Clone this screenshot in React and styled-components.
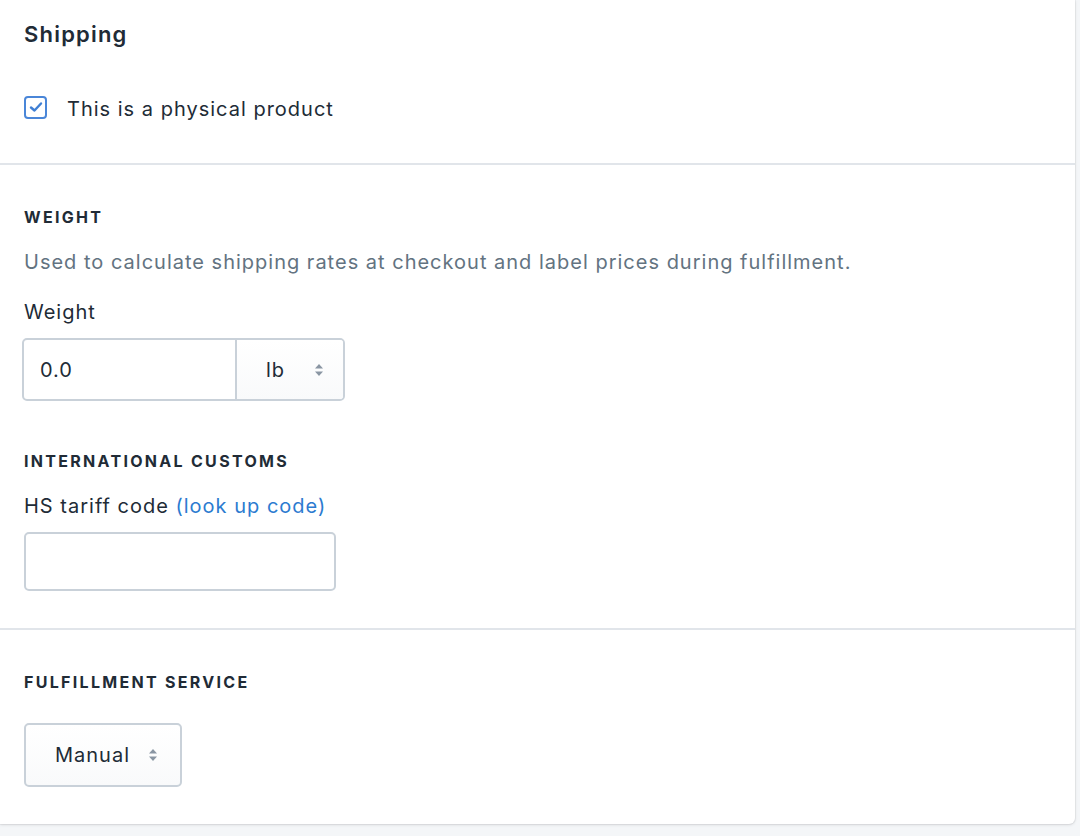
import React from "react";
import styled, { createGlobalStyle } from "styled-components";

const GlobalStyle = createGlobalStyle`
  html, body { margin: 0; padding: 0; }
  body {
    background: #f4f6f8;
    font-family: Inter, "Noto Sans", "Liberation Sans", sans-serif;
    color: #212b36;
    letter-spacing: 1px;
    -webkit-font-smoothing: antialiased;
  }
`;

const Page = styled.div`
  width: 1080px;
  height: 836px;
  background: #f4f6f8;
`;

const Card = styled.div`
  width: 1075px;
  background: #fff;
  border-bottom-right-radius: 6px;
  box-shadow: 0 0 0 1px rgba(63, 63, 68, 0.05), 0 1px 3px 0 rgba(63, 63, 68, 0.15);
`;

const Section = styled.section`
  padding: ${(p) => p.$pad};
  border-top: ${(p) => (p.$first ? "none" : "2px solid #e1e5ea")};
`;

const Heading = styled.h2`
  margin: 0;
  font-size: 22px;
  line-height: 28px;
  font-weight: 600;
  letter-spacing: 1.2px;
  color: #212b36;
`;

const CheckRow = styled.label`
  display: flex;
  align-items: center;
  gap: 20px;
  margin-top: 47px;
  height: 24px;
  font-size: 20px;
  line-height: 28px;
  color: #212b36;
`;

const CheckText = styled.span`
  padding-top: 3px;
`;

const Box = styled.span`
  box-sizing: border-box;
  width: 23px;
  height: 23px;
  border: 2px solid #4a86d8;
  border-radius: 4px;
  display: flex;
  align-items: center;
  justify-content: center;
  background: #fff;
`;

const Subheading = styled.h3`
  margin: ${(p) => p.$mt || "0"} 0 0;
  font-size: 16px;
  line-height: 24px;
  font-weight: 700;
  letter-spacing: 2.3px;
  text-transform: uppercase;
  color: #212b36;
`;

const Help = styled.p`
  margin: 19px 0 0;
  font-size: 20px;
  line-height: 28px;
  color: #637381;
`;

const Label = styled.div`
  margin-top: ${(p) => p.$mt};
  font-size: 20px;
  line-height: 28px;
  color: #212b36;
`;

const Link = styled.a`
  color: #2c7bd0;
  text-decoration: none;
`;

const Group = styled.div`
  display: flex;
  margin-top: 12px;
  margin-left: -2px;
  width: 323px;
  height: 63px;
  box-sizing: border-box;
  border: 2px solid #c9d1d9;
  border-radius: 5px;
  overflow: hidden;
`;

const GroupInput = styled.div`
  flex: 0 0 213px;
  box-sizing: border-box;
  border-right: 2px solid #c9d1d9;
  display: flex;
  align-items: center;
  padding-left: 16px;
  font-size: 20px;
  color: #212b36;
`;

const SelectInner = styled.div`
  flex: 1;
  display: flex;
  align-items: center;
  padding-left: 29px;
  font-size: 20px;
  color: #212b36;
  background: linear-gradient(#fff, #f9fafb);
`;

const TextInput = styled.div`
  margin-top: 12px;
  width: 312px;
  height: 59px;
  box-sizing: border-box;
  border: 2px solid #c9d1d9;
  border-radius: 5px;
  background: #fff;
`;

const Select = styled.div`
  margin-top: 29px;
  width: 158px;
  height: 64px;
  box-sizing: border-box;
  border: 2px solid #c9d1d9;
  border-radius: 5px;
  display: flex;
  align-items: center;
  padding-left: 29px;
  font-size: 20px;
  color: #212b36;
  background: linear-gradient(#fff, #f9fafb);
`;

const Arrows = styled.svg`
  width: 10px;
  height: 14px;
  margin-left: ${(p) => p.$ml};
  flex: none;
`;

const SelectArrows = ({ ml }) => (
  <Arrows $ml={ml} viewBox="0 0 10 14">
    <path d="M5 1 L9 5.5 H1 Z" fill="#8a96a3" />
    <path d="M5 13 L9 8.5 H1 Z" fill="#8a96a3" />
  </Arrows>
);

export default function App() {
  return (
    <Page>
      <GlobalStyle />
      <Card>
        <Section $first $pad="20px 24px 44px">
          <Heading>Shipping</Heading>
          <CheckRow>
            <Box>
              <svg width="14" height="12" viewBox="0 0 14 12">
                <path d="M2 6.5 L5.5 9.5 L12 2.5" fill="none" stroke="#3f7fd4" strokeWidth="2.4" strokeLinecap="round" strokeLinejoin="round" />
              </svg>
            </Box>
            <CheckText>This is a physical product</CheckText>
          </CheckRow>
        </Section>
        <Section $pad="40px 24px 37px">
          <Subheading>Weight</Subheading>
          <Help>Used to calculate shipping rates at checkout and label prices during fulfillment.</Help>
          <Label $mt="22px">Weight</Label>
          <Group>
            <GroupInput>0.0</GroupInput>
            <SelectInner>
              lb
              <SelectArrows ml="29px" />
            </SelectInner>
          </Group>
          <Subheading $mt="48px">International customs</Subheading>
          <Label $mt="19px">
            HS tariff code <Link href="#">(look up code)</Link>
          </Label>
          <TextInput />
        </Section>
        <Section $pad="40px 24px 37px">
          <Subheading>Fulfillment service</Subheading>
          <Select>
            Manual
            <SelectArrows ml="18px" />
          </Select>
        </Section>
      </Card>
    </Page>
  );
}
